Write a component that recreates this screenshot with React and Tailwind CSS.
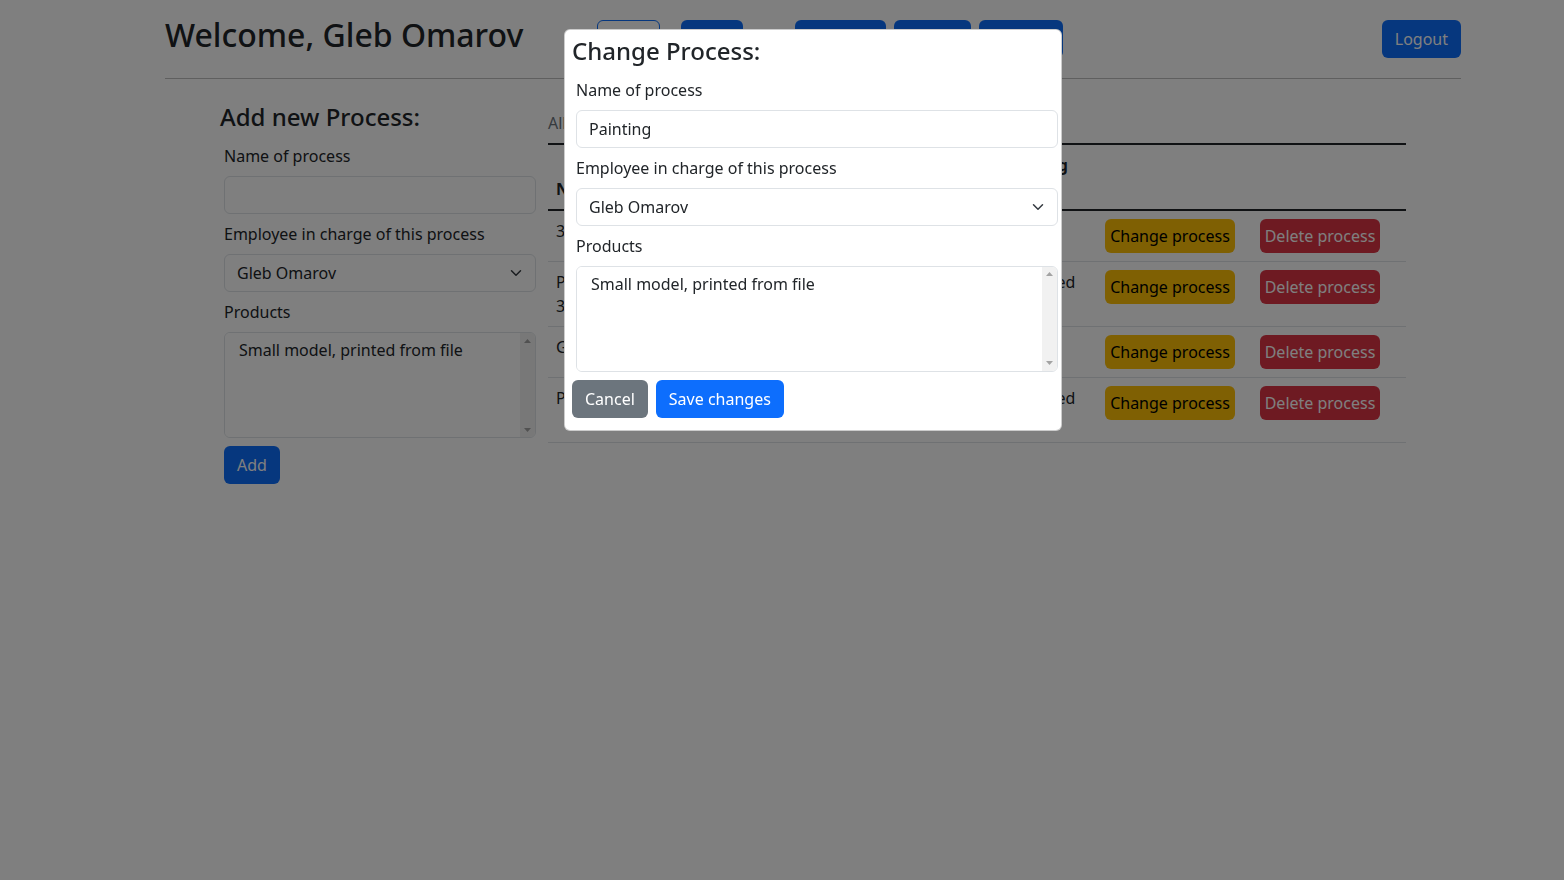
import React from 'react';

const processes = [
  { id: 1, name: '3D printing', employee: 'Gleb Omarov', products: 'Small model' },
  { id: 2, name: 'Printing', name2: '3D models', employee: 'Gleb Omarov', products: 'Small model, printed from file' },
  { id: 3, name: 'Grinding', employee: 'Gleb Omarov', products: 'Large model' },
  { id: 4, name: 'Painting', employee: 'Gleb Omarov', products: 'Small model, printed from file' },
];

const Chevron = () => (
  <svg className="absolute right-[12px] top-1/2 -translate-y-1/2 pointer-events-none" width="16" height="12" viewBox="0 0 16 16" fill="none">
    <path d="m2 5 6 6 6-6" stroke="#343a40" strokeWidth="2" strokeLinecap="round" strokeLinejoin="round" />
  </svg>
);

// textarea's classic scrollbar, drawn by hand
const FakeScrollbar = () => (
  <div className="w-[15px] bg-[#f1f1f1] flex flex-col justify-between">
    <div className="h-[15px] flex items-center justify-center">
      <svg width="7" height="4" viewBox="0 0 7 4"><polygon points="3.5,0 7,4 0,4" fill="#a3a3a3" /></svg>
    </div>
    <div className="h-[15px] flex items-center justify-center">
      <svg width="7" height="4" viewBox="0 0 7 4"><polygon points="0,0 7,0 3.5,4" fill="#a3a3a3" /></svg>
    </div>
  </div>
);

const Field = ({ label, children }) => (
  <div className="mb-2">
    <label className="block mb-2 leading-6">{label}</label>
    {children}
  </div>
);

const ProcessForm = ({ name }) => (
  <>
    <Field label="Name of process">
      <input
        defaultValue={name}
        className="block w-full h-[38px] px-3 border border-[#dee2e6] rounded-md bg-white outline-none"
      />
    </Field>
    <Field label="Employee in charge of this process">
      <div className="relative">
        <select className="block w-full h-[38px] pl-3 pr-10 border border-[#dee2e6] rounded-md bg-white appearance-none outline-none">
          <option>Gleb Omarov</option>
        </select>
        <Chevron />
      </div>
    </Field>
    <div>
      <label className="block mb-2 leading-6">Products</label>
      <div className="flex h-[106px] border border-[#dee2e6] rounded-md bg-white overflow-hidden">
        <textarea
          readOnly
          value="Small model, printed from file"
          className="flex-1 pl-[14px] pt-[5px] bg-white resize-none overflow-hidden outline-none leading-6"
        />
        <FakeScrollbar />
      </div>
    </div>
  </>
);

export default function App() {
  return (
    <div className="relative min-h-screen bg-white text-[#212529] text-base font-['Noto_Sans',sans-serif]">
      <div className="w-[1296px] ml-[165px]">
        <div className="flex items-center pt-4">
          <h1 className="text-[32px] leading-[1.2] font-medium mb-2 mr-[74px]">Welcome, Gleb Omarov</h1>
          <div className="flex items-center">
            <button className="w-[63px] h-[38px] border border-[#0d6efd] text-[#0d6efd] rounded-md">Home</button>
            <button className="w-[62px] h-[38px] ml-[21px] bg-[#0d6efd] text-white rounded-md">Users</button>
            <button className="w-[91px] h-[38px] ml-[52px] bg-[#0d6efd] text-white rounded-md">Products</button>
            <button className="w-[77px] h-[38px] ml-2 bg-[#0d6efd] text-white rounded-md">Orders</button>
            <button className="w-[84px] h-[38px] ml-2 bg-[#0d6efd] text-white rounded-md">Process</button>
          </div>
          <button className="ml-auto h-[38px] px-3 border border-transparent bg-[#0d6efd] text-white rounded-md">Logout</button>
        </div>
        <hr className="mt-4 border-t border-black/25" />

        <div className="flex mt-6 ml-[55px]">
          <div className="w-[316px]">
            <h4 className="text-2xl leading-[1.2] font-medium mb-2">Add new Process:</h4>
            <div className="pl-1 pt-1">
              <ProcessForm name="" />
              <button className="mt-2 h-[38px] px-3 border border-transparent bg-[#0d6efd] text-white rounded-md">Add</button>
            </div>
          </div>

          <div className="w-[858px] ml-3">
            <table className="w-full table-fixed border-collapse">
              <caption className="caption-top text-left py-2 text-[#6c757d] leading-6">All processes</caption>
              <colgroup>
                <col className="w-[120px]" />
                <col className="w-[243px]" />
                <col className="w-[186px]" />
                <col className="w-[155px]" />
                <col className="w-[154px]" />
              </colgroup>
              <thead>
                <tr className="border-t-2 border-b-2 border-[#212529]">
                  <th className="p-2 text-left align-bottom leading-6">Name</th>
                  <th className="p-2 text-left align-bottom leading-6">Employee in charge</th>
                  <th className="p-2 text-left align-bottom leading-6">Products requiring this process</th>
                  <th className="p-2"></th>
                  <th className="p-2"></th>
                </tr>
              </thead>
              <tbody>
                {processes.map(p => (
                  <tr key={p.id} className="border-b border-[#dee2e6]">
                    <td className="p-2 align-top leading-6">
                      {p.name}
                      {p.name2 && <br />}
                      {p.name2}
                    </td>
                    <td className="p-2 align-top leading-6">{p.employee}</td>
                    <td className="p-2 align-top leading-6">{p.products}</td>
                    <td className="p-2 align-top">
                      <button className="w-[130px] h-[34px] bg-[#ffc107] text-black rounded-md whitespace-nowrap">Change process</button>
                    </td>
                    <td className="p-2 align-top">
                      <button className="w-[120px] h-[34px] bg-[#dc3545] text-white rounded-md whitespace-nowrap">Delete process</button>
                    </td>
                  </tr>
                ))}
              </tbody>
            </table>
          </div>
        </div>
      </div>

      <div className="fixed inset-0 bg-black/50" />

      <div className="absolute left-[564px] top-[29px] w-[498px] bg-white border border-black/20 rounded-md pl-[7px] pr-[3px] pt-[7px] pb-3">
        <h4 className="text-2xl leading-[1.2] font-medium mb-2">Change Process:</h4>
        <div className="pl-1 pt-1">
          <ProcessForm name="Painting" />
        </div>
        <div className="flex gap-2 mt-2">
          <button className="h-[38px] px-3 border border-transparent bg-[#6c757d] text-white rounded-md">Cancel</button>
          <button className="h-[38px] px-3 border border-transparent bg-[#0d6efd] text-white rounded-md">Save changes</button>
        </div>
      </div>
    </div>
  );
}
